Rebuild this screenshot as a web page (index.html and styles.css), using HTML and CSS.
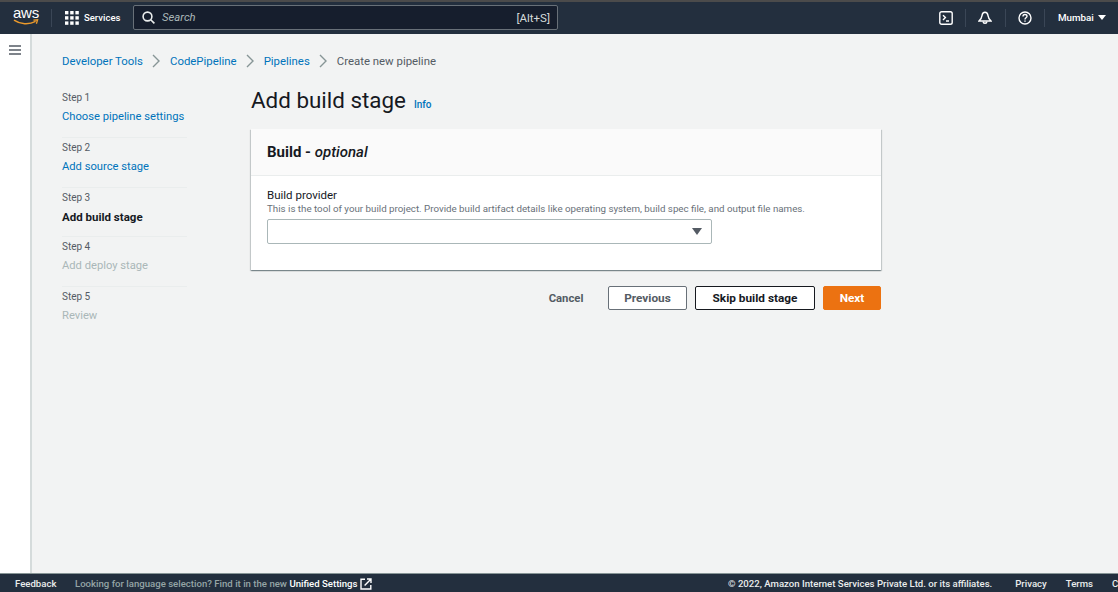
FILE: index.html
```html
<!DOCTYPE html>
<html lang="en">

<head>
  <meta charset="UTF-8">
  <meta name="viewport" content="width=device-width, initial-scale=1.0">
  <title>Add build stage</title>
  <link rel="stylesheet" href="styles.css">
</head>

<body>
  <header class="topbar">
    <div class="logo">
      <span class="logo-text">aws</span>
      <svg class="logo-smile" width="26" height="7" viewBox="0 0 26 7">
        <path d="M1 1.2C7 5.4 16 6 22.6 2.4" fill="none" stroke="#ec9a2b" stroke-width="1.5" />
        <path d="M20.4 1.2 24.6 .8 23.4 4.8" fill="none" stroke="#ec9a2b" stroke-width="1.3" />
      </svg>
    </div>
    <div class="services">
      <svg width="14" height="14" viewBox="0 0 14 14" fill="#fff">
        <rect x="0" y="0" width="3.4" height="3.4" />
        <rect x="5.2" y="0" width="3.4" height="3.4" />
        <rect x="10.4" y="0" width="3.4" height="3.4" />
        <rect x="0" y="5.2" width="3.4" height="3.4" />
        <rect x="5.2" y="5.2" width="3.4" height="3.4" />
        <rect x="10.4" y="5.2" width="3.4" height="3.4" />
        <rect x="0" y="10.4" width="3.4" height="3.4" />
        <rect x="5.2" y="10.4" width="3.4" height="3.4" />
        <rect x="10.4" y="10.4" width="3.4" height="3.4" />
      </svg>
      <span>Services</span>
    </div>
    <div class="search">
      <svg width="13" height="13" viewBox="0 0 13 13" fill="none" stroke="#eaeded" stroke-width="1.6">
        <circle cx="5.5" cy="5.5" r="4.4" />
        <path d="M8.7 8.7 12.4 12.4" />
      </svg>
      <span class="search-text">Search</span>
      <span class="search-key">[Alt+S]</span>
    </div>
    <div class="topbar-right">
      <div class="top-icon">
        <svg width="14" height="14" viewBox="0 0 14 14" fill="none" stroke="#fff" stroke-width="1.4">
          <rect x=".8" y=".8" width="12.4" height="12.4" rx="1.8" />
          <path d="M4 4.2 6.4 6.6 4 9M7 10H10" />
        </svg>
      </div>
      <div class="top-icon">
        <svg width="14" height="14" viewBox="0 0 14 14" fill="none" stroke="#fff" stroke-width="1.4">
          <path d="M7 1.2C5 1.2 4.2 2.8 4 4.6 3.8 7 2.6 8.4 1 10H13C11.4 8.4 10.2 7 10 4.6 9.8 2.8 9 1.2 7 1.2Z" />
          <path d="M5.2 10.5C5.2 12.9 8.8 12.9 8.8 10.5" />
        </svg>
      </div>
      <div class="top-icon">
        <svg width="14" height="14" viewBox="0 0 14 14" fill="none" stroke="#fff" stroke-width="1.4">
          <circle cx="7" cy="7" r="6" />
          <path d="M5 5.4C5 2.8 9 2.8 9 5.3 9 6.8 7 6.8 7 8.4" />
          <path d="M7 9.4V10.8" />
        </svg>
      </div>
      <div class="region">Mumbai <span class="caret"></span></div>
    </div>
  </header>

  <div class="page">
    <aside class="sidenav">
      <svg width="12" height="10" viewBox="0 0 12 10" fill="none" stroke="#545b64" stroke-width="1.6">
        <path d="M0 1H12M0 5H12M0 9H12" />
      </svg>
    </aside>

    <main class="content">
      <nav class="breadcrumbs">
        <a href="#">Developer Tools</a>
        <svg class="crumb-sep" width="8" height="14" viewBox="0 0 8 14"><path d="M1 1 7 7 1 13" /></svg>
        <a href="#">CodePipeline</a>
        <svg class="crumb-sep" width="8" height="14" viewBox="0 0 8 14"><path d="M1 1 7 7 1 13" /></svg>
        <a href="#">Pipelines</a>
        <svg class="crumb-sep" width="8" height="14" viewBox="0 0 8 14"><path d="M1 1 7 7 1 13" /></svg>
        <span>Create new pipeline</span>
      </nav>

      <div class="columns">
        <ol class="steps">
          <li class="step">
            <small>Step 1</small>
            <a href="#">Choose pipeline settings</a>
          </li>
          <li class="step">
            <small>Step 2</small>
            <a href="#">Add source stage</a>
          </li>
          <li class="step">
            <small>Step 3</small>
            <strong>Add build stage</strong>
          </li>
          <li class="step">
            <small>Step 4</small>
            <span class="disabled">Add deploy stage</span>
          </li>
          <li class="step">
            <small>Step 5</small>
            <span class="disabled">Review</span>
          </li>
        </ol>

        <section class="form-area">
          <div class="title-row">
            <h1>Add build stage</h1>
            <a class="info" href="#">Info</a>
          </div>

          <div class="card">
            <div class="card-head">
              <h2>Build - <em>optional</em></h2>
            </div>
            <div class="card-body">
              <div class="field-label">Build provider</div>
              <div class="field-hint">This is the tool of your build project. Provide build artifact details like operating system, build spec file, and output file names.</div>
              <div class="select"><span class="select-caret"></span></div>
            </div>
          </div>

          <div class="actions">
            <button class="btn-link">Cancel</button>
            <button class="btn btn-prev">Previous</button>
            <button class="btn btn-skip">Skip build stage</button>
            <button class="btn btn-next">Next</button>
          </div>
        </section>
      </div>
    </main>
  </div>

  <footer class="footer">
    <div class="footer-left">
      <span class="feedback">Feedback</span>
      <span class="lang-note">Looking for language selection? Find it in the new <b>Unified Settings</b></span>
      <svg class="ext" width="12" height="12" viewBox="0 0 12 12" fill="none" stroke="#fff" stroke-width="1.4">
        <path d="M5 1.2H1V11H10.8V7" />
        <path d="M4.6 7.4 10.8 1.2M7 1H11V5" />
      </svg>
    </div>
    <div class="footer-right">
      <span class="copyright">© 2022, Amazon Internet Services Private Ltd. or its affiliates.</span>
      <span>Privacy</span>
      <span>Terms</span>
      <span>Cookie preferences</span>
    </div>
  </footer>
</body>

</html>
```

FILE: styles.css
```css
* {
  padding: 0;
  margin: 0;
  box-sizing: border-box;
  font-family: Roboto, 'Noto Sans', sans-serif;
}

html, body {
  height: 100%;
  overflow: hidden;
}

body {
  display: flex;
  flex-direction: column;
  width: 1118px;
  height: 592px;
  background-color: #f2f3f3;
  font-size: 12px;
  color: #16191f;
}

a {
  color: #0073bb;
  text-decoration: none;
}

/* top bar */
.topbar {
  display: flex;
  align-items: center;
  flex-shrink: 0;
  height: 34px;
  padding-bottom: 1px;
  background-color: #232f3e;
  border-top: 2px solid #4b4b4b;
  color: #fff;
}

.logo {
  display: flex;
  flex-direction: column;
  align-items: center;
  width: 26px;
  margin-left: 13px;
  padding-bottom: 4px;
}

.logo-text {
  font-family: 'Liberation Sans', sans-serif;
  font-size: 15px;
  line-height: 13px;
  letter-spacing: -0.2px;
}

.logo-smile {
  display: block;
}

.services {
  display: flex;
  align-items: center;
  gap: 5px;
  width: 82px;
  height: 18px;
  margin-left: 12px;
  padding-left: 13px;
  border-left: 1px solid #3a4656;
  font-size: 9.5px;
  font-weight: 500;
}

.search {
  display: flex;
  align-items: center;
  width: 425px;
  height: 25px;
  padding: 0 7px 0 8px;
  background-color: #161e2d;
  border: 1px solid #687078;
  border-radius: 2px;
}

.search-text {
  margin-left: 7px;
  font-size: 11.3px;
  font-style: italic;
  color: #aab7b8;
}

.search-key {
  margin-left: auto;
  font-size: 11.5px;
  color: #d5dbdb;
}

.topbar-right {
  display: flex;
  align-items: center;
  margin-left: auto;
}

.top-icon {
  display: flex;
  justify-content: center;
  align-items: center;
  width: 39.5px;
  height: 18px;
  border-right: 1px solid #3a4656;
}

.region {
  display: flex;
  align-items: center;
  gap: 4px;
  width: 73px;
  padding-left: 13px;
  font-size: 9.8px;
  font-weight: 500;
}

.caret {
  border-left: 4px solid transparent;
  border-right: 4px solid transparent;
  border-top: 5px solid #fff;
}

/* page */
.page {
  display: flex;
  flex: 1;
  min-height: 0;
}

.sidenav {
  flex-shrink: 0;
  width: 32px;
  padding: 11px 0 0 9px;
  background-color: #fff;
  border-right: 2px solid #d5dbdb;
}

.sidenav svg {
  display: block;
}

.content {
  flex: 1;
  padding: 19px 0 0 30px;
}

.breadcrumbs {
  display: flex;
  align-items: center;
  height: 16px;
  font-size: 11.4px;
  color: #545b64;
}

.crumb-sep {
  margin: 0 9.5px;
  fill: none;
  stroke: #879596;
  stroke-width: 1.4;
}

.columns {
  display: flex;
  margin-top: 19px;
}

/* steps */
.steps {
  flex-shrink: 0;
  width: 189px;
  list-style: none;
}

.step {
  display: flex;
  flex-direction: column;
  width: 125px;
  height: 49.8px;
  padding-top: 2px;
  border-bottom: 1px solid #eaeded;
  font-size: 11.2px;
  white-space: nowrap;
}

.step:last-child {
  border-bottom: none;
}

.step small {
  height: 17px;
  font-size: 10px;
  line-height: 15px;
  color: #545b64;
}

.step a, .step strong, .step .disabled {
  line-height: 20px;
}

.step strong {
  font-size: 11.5px;
  font-weight: 700;
}

.disabled {
  color: #aab7b8;
}

/* form */
.form-area {
  width: 630px;
}

.title-row {
  display: flex;
  align-items: baseline;
  gap: 8px;
  height: 41px;
}

h1 {
  font-size: 22.4px;
  font-weight: 400;
  line-height: 24px;
}

.info {
  font-size: 10px;
  font-weight: 500;
}

.card {
  height: 141px;
  background-color: #fff;
  box-shadow: 0 1px 1px 0 rgba(0, 28, 36, .3), 1px 1px 1px 0 rgba(0, 28, 36, .15), -1px 1px 1px 0 rgba(0, 28, 36, .15);
}

.card-head {
  display: flex;
  align-items: center;
  height: 47px;
  padding-left: 16px;
  background-color: #fafafa;
  border-bottom: 1px solid #eaeded;
}

h2 {
  font-size: 15px;
  font-weight: 700;
}

h2 em {
  font-weight: 500;
}

.card-body {
  padding: 12px 16px 0;
}

.field-label {
  font-size: 11.5px;
  line-height: 14px;
  color: #16191f;
}

.field-hint {
  font-size: 9.75px;
  line-height: 13px;
  color: #687078;
}

.select {
  display: flex;
  justify-content: flex-end;
  align-items: center;
  width: 445px;
  height: 25px;
  margin-top: 4px;
  padding-right: 9px;
  background-color: #fff;
  border: 1px solid #aab7b8;
  border-radius: 2px;
}

.select-caret {
  border-left: 5px solid transparent;
  border-right: 5px solid transparent;
  border-top: 7px solid #545b64;
}

.actions {
  display: flex;
  justify-content: flex-end;
  align-items: center;
  gap: 8px;
  margin-top: 16px;
}

button {
  height: 24px;
  font-size: 11.8px;
  font-weight: 700;
  border-radius: 2px;
}

.btn-link {
  width: 58px;
  margin-right: 5px;
  background: none;
  border: none;
  font-size: 11.3px;
  color: #545b64;
}

.btn-prev {
  width: 79px;
  background-color: #fff;
  border: 1px solid #687078;
  color: #545b64;
}

.btn-skip {
  width: 120px;
  background-color: #fff;
  border: 1px solid #16191f;
  color: #16191f;
}

.btn-next {
  width: 58px;
  background-color: #ec7211;
  border: 1px solid #ec7211;
  color: #fff;
}

/* footer */
.footer {
  display: flex;
  align-items: center;
  flex-shrink: 0;
  height: 19px;
  padding: 1px 0 0 15px;
  background-color: #232f3e;
  border-top: 1px solid #879596;
  font-size: 9.6px;
  font-weight: 500;
  color: #eaeded;
  white-space: nowrap;
  overflow: hidden;
}

.footer-left {
  display: flex;
  align-items: center;
  flex-shrink: 0;
  width: 713px;
}

.feedback {
  width: 60px;
}

.lang-note {
  color: #95a5a6;
}

.lang-note b {
  font-weight: 500;
  color: #fff;
}

.ext {
  margin-left: 2px;
}

.footer-right {
  display: flex;
  gap: 19px;
}

.copyright {
  margin-right: 4px;
}
```
